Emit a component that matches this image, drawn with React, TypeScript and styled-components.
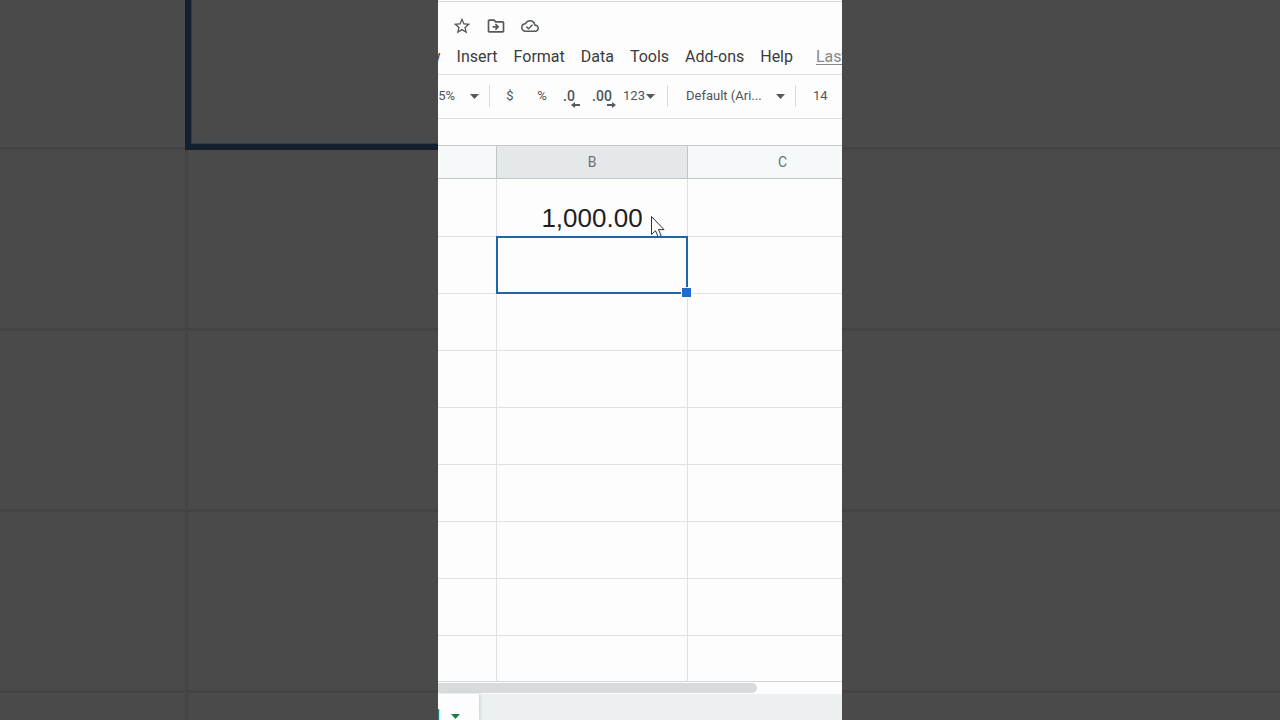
import React from "react";
import styled, { createGlobalStyle, css } from "styled-components";
import {
  MdStarBorder,
  MdOutlineDriveFileMove,
  MdOutlineCloudDone,
} from "react-icons/md";

const GlobalStyle = createGlobalStyle`
  * { box-sizing: border-box; }
  body { margin: 0; background: #4a4a4a; }
  button, select, input { font: inherit; color: inherit; border: 0; background: none; margin: 0; padding: 0; border-radius: 0; }
`;

const Page = styled.div`
  display: flex;
  height: 100vh;
  overflow: hidden;
  font-family: Roboto, "Liberation Sans", sans-serif;
  color: #505458;
`;

/* Dimmed, enlarged sheet on both sides of the strip */
const Backdrop = styled.div<{ $split?: boolean }>`
  flex: 1;
  min-width: 0;
  display: grid;
  grid-template-columns: ${(p) => (p.$split ? "185px 1fr" : "1fr")};
  grid-template-rows: 150px;
  grid-auto-rows: 181px;
  overflow: hidden;
  background: #4a4a4a;
`;

const BackdropCell = styled.div<{ $rule?: boolean; $active?: boolean }>`
  border-bottom: 3px solid #444444;
  ${(p) => p.$rule && css`border-left: 3px solid #444444;`}
  ${(p) =>
    p.$active &&
    css`
      border-left: 6px solid #12202f;
      border-bottom: 6px solid #12202f;
      box-shadow: inset 1px -1px 0 #2c3e4c;
    `}
`;

const Strip = styled.main`
  flex: 0 1 404px;
  min-width: 0;
  display: flex;
  flex-direction: column;
  overflow: hidden;
  background: #fdfdfd;
`;

const TitleRow = styled.header`
  flex: none;
  display: flex;
  align-items: center;
  gap: 14px;
  height: 41px;
  padding: 10px 0 0 14px;
  box-shadow: inset 0 2px 0 -1px #d6d8d9;
  border-top: 1px solid #fdfdfd;
`;

const IconButton = styled.button`
  display: flex;
  width: 20px;
  height: 20px;
  color: #55595e;
  align-items: center;
  justify-content: center;
`;

const MenuBar = styled.nav`
  flex: none;
  display: flex;
  align-items: center;
  height: 33px;
  margin-left: -40px;
  padding-bottom: 2px;
  white-space: nowrap;
`;

const MenuButton = styled.button`
  flex: none;
  padding: 0 8px;
  font-size: 16px;
  line-height: 24px;
  color: #3a3c3e;
`;

const EditLink = styled.a`
  margin-left: 15px;
  font-size: 16px;
  line-height: 24px;
  color: #85888b;
  text-underline-offset: 2px;
`;

const Toolbar = styled.div`
  flex: none;
  display: flex;
  align-items: center;
  height: 45px;
  padding-bottom: 1px;
  border-top: 1px solid #dcdee0;
  border-bottom: 1px solid #dcdee0;
  font-size: 13px;
  line-height: 20px;
  white-space: nowrap;
`;

const Separator = styled.span`
  flex: none;
  width: 1px;
  height: 22px;
  background: #d8dadc;
`;

const ToolbarGap = styled.span`
  flex: none;
  width: 9px;
`;

const Picker = styled.label<{ $width: number; $pad: number; $start?: number }>`
  flex: none;
  display: flex;
  align-items: center;
  width: ${(p) => p.$width}px;
  margin-left: ${(p) => p.$start ?? 0}px;
  padding: 0 10px 0 ${(p) => p.$pad}px;

  select {
    flex: 1;
    min-width: 0;
    appearance: none;
    outline: 0;
  }
`;

const ToolButton = styled.button<{ $width: number; $strong?: boolean }>`
  flex: none;
  display: flex;
  align-items: center;
  justify-content: center;
  gap: 1px;
  width: ${(p) => p.$width}px;
  height: 28px;
  position: relative;
  font-size: ${(p) => (p.$strong ? 14 : 13)}px;
  font-weight: ${(p) => (p.$strong ? 500 : 400)};
`;

const DecimalArrow = styled.svg`
  position: absolute;
  right: 4px;
  bottom: 2px;
`;

const SizeInput = styled.input`
  flex: none;
  width: 48px;
  padding-left: 17px;
  outline: 0;
`;

const FormulaBar = styled.input`
  flex: none;
  height: 26px;
  width: 100%;
  outline: 0;
`;

const SheetArea = styled.div`
  flex: 1;
  min-height: 0;
  overflow: hidden;
  border-top: 1px solid #c4c9c9;
  border-bottom: 1px solid #d3d6d7;
`;

const Table = styled.table`
  table-layout: fixed;
  width: 440px;
  border-collapse: separate;
  border-spacing: 0;

  th {
    height: 33px;
    padding: 0;
    font-size: 14px;
    font-weight: 400;
    color: #6c7073;
    background: #f5f9fa;
    border-right: 1px solid #c0c5c5;
    border-bottom: 1px solid #c0c7c6;
  }

  td {
    position: relative;
    height: 57px;
    padding: 0;
    border-right: 1px solid #e0e1e3;
    border-bottom: 1px solid #e0e1e3;
    font-family: "Liberation Sans", Arial, sans-serif;
    font-size: 26px;
    line-height: 36px;
    text-align: center;
    vertical-align: bottom;
    color: #1f1f1f;
  }

  tbody tr:first-child td {
    height: 58px;
  }
`;

const LabelCol = styled.col`
  width: 59px;
`;

const DataCol = styled.col<{ $width: number }>`
  width: ${(p) => p.$width}px;
`;

const ActiveHead = styled.th`
  && { background: #e5e8eb; }
`;

const Selection = styled.div`
  position: absolute;
  z-index: 1;
  inset: -1px;
  border: 2px solid #1c66ad;

  &::after {
    content: "";
    position: absolute;
    right: -6px;
    bottom: -6px;
    width: 9px;
    height: 9px;
    border: 1px solid #fdfdfd;
    background: #1f6ccd;
  }
`;

const Pointer = styled.svg`
  position: absolute;
  z-index: 1;
  right: 21px;
  bottom: -3px;
`;

const ScrollTrack = styled.div`
  flex: none;
  height: 12px;
  padding-top: 1px;
`;

const ScrollThumb = styled.div`
  width: 79%;
  height: 10px;
  border-radius: 0 5px 5px 0;
  background: #d8dbdc;
`;

const SheetBar = styled.footer`
  flex: none;
  display: flex;
  height: 26px;
  background: #ecf0f1;
`;

const SheetTab = styled.button`
  display: flex;
  align-items: flex-start;
  justify-content: flex-end;
  gap: 9px;
  width: 41px;
  padding: 12px 19px 0 0;
  background: #fdfdfd;
  box-shadow: 1px 0 3px #c9cdcf;
  color: #188048;
  font-size: 16px;
  font-weight: 700;
  line-height: 20px;
`;

const TabCaret = styled.span`
  display: flex;
  align-items: center;
  height: 20px;
`;

const CaretIcon = styled.svg`
  flex: none;
`;

const Caret = ({ color = "#55595e" }: { color?: string }) => (
  <CaretIcon width="9" height="5" viewBox="0 0 9 5" aria-hidden>
    <path d="M0 0h9L4.5 5z" fill={color} />
  </CaretIcon>
);

const ROWS = [1, 2, 3, 4, 5, 6, 7, 8, 9];
const BACKDROP_ROWS = [0, 1, 2, 3, 4];
const MENUS = ["View", "Insert", "Format", "Data", "Tools", "Add-ons", "Help"];

export default function App() {
  return (
    <Page>
      <GlobalStyle />
      <Backdrop $split aria-hidden>
        {BACKDROP_ROWS.map((r) => (
          <React.Fragment key={r}>
            <BackdropCell />
            <BackdropCell $rule $active={r === 0} />
          </React.Fragment>
        ))}
      </Backdrop>

      <Strip>
        <TitleRow>
          <IconButton aria-label="Star"><MdStarBorder size={20} /></IconButton>
          <IconButton aria-label="Move"><MdOutlineDriveFileMove size={20} /></IconButton>
          <IconButton aria-label="Document status"><MdOutlineCloudDone size={18} /></IconButton>
        </TitleRow>

        <MenuBar>
          {MENUS.map((m) => (
            <MenuButton key={m}>{m}</MenuButton>
          ))}
          <EditLink href="#history">Last edit</EditLink>
        </MenuBar>

        <Toolbar>
          <Picker $width={63} $pad={5} $start={-12}>
            <select aria-label="Zoom"><option>75%</option></select>
            <Caret />
          </Picker>
          <Separator />
          <ToolButton $width={40}>$</ToolButton>
          <ToolButton $width={24}>%</ToolButton>
          <ToolButton $width={30} $strong>
            .0
            <DecimalArrow width="9" height="6" viewBox="0 0 9 6">
              <path d="M9 2H4V0L0 3l4 3V4H9z" fill="#55595e" />
            </DecimalArrow>
          </ToolButton>
          <ToolButton $width={36} $strong>
            .00
            <DecimalArrow width="9" height="6" viewBox="0 0 9 6">
              <path d="M0 2h5V0l4 3-4 3V4H0z" fill="#55595e" />
            </DecimalArrow>
          </ToolButton>
          <ToolButton $width={38}>123<Caret /></ToolButton>
          <ToolbarGap />
          <Separator />
          <Picker $width={127} $pad={18}>
            <select aria-label="Font"><option>Default (Ari...</option></select>
            <Caret />
          </Picker>
          <Separator />
          <SizeInput aria-label="Font size" defaultValue="14" />
        </Toolbar>

        <FormulaBar aria-label="Formula" />

        <SheetArea>
          <Table>
            <colgroup>
              <LabelCol />
              <DataCol $width={191} />
              <DataCol $width={190} />
            </colgroup>
            <thead>
              <tr><th /><ActiveHead>B</ActiveHead><th>C</th></tr>
            </thead>
            <tbody>
              {ROWS.map((r) => (
                <tr key={r}>
                  <td />
                  <td>
                    {r === 1 && (
                      <>
                        1,000.00
                        <Pointer width="16" height="24" viewBox="0 0 16 24">
                          <path
                            d="M1.5 1.5v18l4-3.8 2.7 6.2 3-1.3-2.7-6h5.5z"
                            fill="#fdfdfd"
                            stroke="#333"
                          />
                        </Pointer>
                      </>
                    )}
                    {r === 2 && <Selection />}
                  </td>
                  <td />
                </tr>
              ))}
            </tbody>
          </Table>
        </SheetArea>

        <ScrollTrack><ScrollThumb /></ScrollTrack>
        <SheetBar>
          <SheetTab>
            Sheet1
            <TabCaret><Caret color="#188048" /></TabCaret>
          </SheetTab>
        </SheetBar>
      </Strip>

      <Backdrop aria-hidden>
        {BACKDROP_ROWS.map((r) => <BackdropCell key={r} />)}
      </Backdrop>
    </Page>
  );
}
